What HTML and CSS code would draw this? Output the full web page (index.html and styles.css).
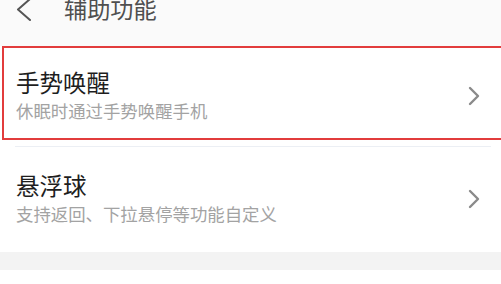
FILE: index.html
```html
<!DOCTYPE html>
<html lang="zh-CN">
<head>
<meta charset="utf-8">
<link rel="stylesheet" href="styles.css">
</head>
<body>
<div class="page">
  <header class="topbar">
    <svg class="back" width="16" height="24" viewBox="0 0 16 24"><path d="M14 1 L2 11.5 L14 22" fill="none" stroke="#555" stroke-width="2" stroke-linecap="round" stroke-linejoin="round"/></svg>
    <span class="page-title">辅助功能</span>
  </header>
  <section class="list">
    <div class="item item-highlight">
      <div class="texts">
        <div class="item-title">手势唤醒</div>
        <div class="item-desc">休眠时通过手势唤醒手机</div>
      </div>
      <svg class="chev" width="12" height="20" viewBox="0 0 12 20"><path d="M2 2 L10 10 L2 18" fill="none" stroke="#8a8a8a" stroke-width="2.4" stroke-linecap="round" stroke-linejoin="round"/></svg>
    </div>
    <div class="divider"></div>
    <div class="item item-plain">
      <div class="texts">
        <div class="item-title">悬浮球</div>
        <div class="item-desc">支持返回、下拉悬停等功能自定义</div>
      </div>
      <svg class="chev" width="12" height="20" viewBox="0 0 12 20"><path d="M2 2 L10 10 L2 18" fill="none" stroke="#8a8a8a" stroke-width="2.4" stroke-linecap="round" stroke-linejoin="round"/></svg>
    </div>
  </section>
  <div class="band"></div>
</div>
</body>
</html>
```

FILE: styles.css
```css
html, body {
  margin: 0;
  padding: 0;
  background: #ffffff;
}
body {
  font-family: "Noto Sans CJK SC", "Noto Sans", sans-serif;
  overflow: hidden;
}
.page {
  width: 501px;
  height: 284px;
  overflow: hidden;
  background: #ffffff;
}
.topbar {
  height: 46px;
  background: #fafafa;
  display: flex;
  align-items: flex-start;
  padding-left: 16px;
  box-sizing: border-box;
}
.back {
  margin-top: -2px;
  flex: none;
}
.page-title {
  margin-left: 32px;
  margin-top: -6px;
  font-size: 23.2px;
  line-height: 28px;
  color: #4f4f4f;
}
.list {
  background: #ffffff;
}
.item {
  display: flex;
  align-items: center;
  justify-content: space-between;
}
.item-highlight {
  margin-left: 2px;
  width: 509px;
  box-sizing: border-box;
  border: 2.5px solid #e23c3c;
  padding: 20px 29px 15px 12px;
}
.item-plain {
  width: 501px;
  box-sizing: border-box;
  padding: 24px 21px 26px 16px;
}
.texts {
  display: flex;
  flex-direction: column;
  gap: 3px;
}
.item-title {
  font-size: 23.5px;
  line-height: 28px;
  color: #1e1e1e;
}
.item-desc {
  font-size: 17.4px;
  line-height: 24px;
  color: #a3a3a3;
}
.chev {
  flex: none;
}
.divider {
  height: 1px;
  margin: 6px 10px 0 15px;
  background: #eceff4;
}
.band {
  height: 18px;
  background: #f3f3f3;
}
```
